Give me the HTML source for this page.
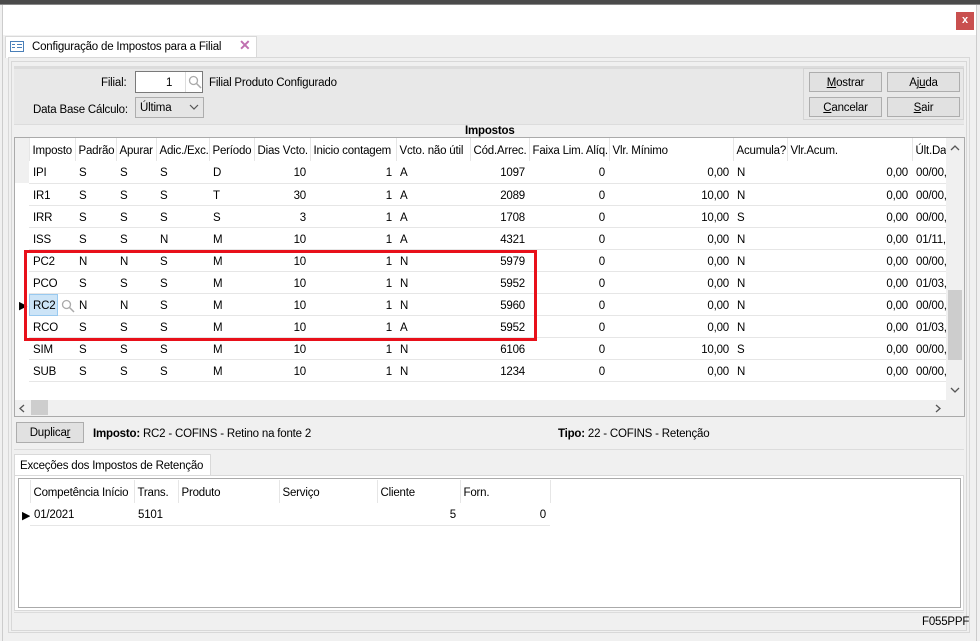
<!DOCTYPE html>
<html><head><meta charset="utf-8"><style>
*{box-sizing:border-box;margin:0;padding:0}
body{width:980px;height:641px;overflow:hidden;background:#f0f0f0;font-family:"Liberation Sans",sans-serif;font-size:11.5px;letter-spacing:-0.2px;color:#000;position:relative}
.a{position:absolute}
.t{position:absolute;margin-top:2px}
.btn{position:absolute;background:#e1e1e1;border:1px solid #adadad;text-align:center;line-height:20px}
table{border-collapse:collapse;table-layout:fixed;position:absolute}
td{height:22px;white-space:nowrap;overflow:hidden;padding:3px 4px 0;border-bottom:1px solid #e6e6e6}
th{height:23px;font-weight:normal;text-align:left;white-space:nowrap;overflow:hidden;padding:3px 3px 0;border-right:1px solid #e6e6e6}
.r{text-align:right}
td.i{border-bottom:none;background:#fff}
</style></head><body>
<div class="a" style="left:0;top:0;width:980px;height:4px;background:#4a4a4a"></div>
<div class="a" style="left:0;top:4px;width:980px;height:1px;background:#888"></div>
<div class="a" style="left:2px;top:5px;width:975px;height:636px;background:#f0f0f0;border-left:1px solid #ccc;border-right:1px solid #ccc"></div>
<div class="a" style="left:3px;top:5px;width:973px;height:30px;background:#fff"></div>
<div class="a" style="left:956px;top:12px;width:18px;height:18px;background:#c9504f;color:#fff;font-size:11px;font-weight:bold;text-align:center;line-height:17px">x</div>
<div class="a" style="left:5px;top:36px;width:252px;height:22px;background:#fff;border:1px solid #d9d9d9;border-bottom:none"></div>
<svg class="a" style="left:10px;top:41px" width="14" height="11"><rect x="0.5" y="0.5" width="13" height="10" fill="#fff" stroke="#4a7fb8"/><rect x="2" y="3" width="3" height="1" fill="#4a7fb8"/><rect x="2" y="6" width="3" height="1" fill="#4a7fb8"/><rect x="7" y="3" width="5" height="1" fill="#4a7fb8"/><rect x="7" y="6" width="5" height="1" fill="#4a7fb8"/></svg>
<div class="t" style="left:32px;top:39px">Configuração de Impostos para a Filial</div>
<div class="a" style="left:239px;top:37px;color:#c070b0;font-size:14px;font-weight:bold">✕</div>
<div class="a" style="left:8px;top:57px;width:962px;height:576px;border:1px solid #d8d8d8;background:#f0f0f0"></div>
<div class="a" style="left:11px;top:61px;width:956px;height:570px;border:1px solid #d8d8d8"></div>
<div class="a" style="left:14px;top:66px;width:950px;height:58px;background:#e8e8e8;border-top:3px solid #dcdcdc"></div>
<div class="t" style="left:101px;top:75px">Filial:</div>
<div class="a" style="left:135px;top:71px;width:68px;height:22px;background:#fff;border:1px solid #7a7a7a"></div>
<div class="t" style="left:166px;top:75px">1</div>
<div class="a" style="left:185px;top:72px;width:1px;height:20px;background:#ddd"></div>
<svg class="a" style="left:188px;top:75px" width="14" height="14"><circle cx="5.5" cy="5.5" r="4" fill="none" stroke="#aaa" stroke-width="1.3"/><line x1="8.5" y1="8.5" x2="13" y2="13" stroke="#aaa" stroke-width="1.5"/></svg>
<div class="t" style="left:209px;top:75px">Filial Produto Configurado</div>
<div class="t" style="left:33px;top:102px">Data Base Cálculo:</div>
<div class="a" style="left:135px;top:97px;width:69px;height:21px;background:#e5e5e5;border:1px solid #adadad"></div>
<div class="t" style="left:140px;top:100px">Última</div>
<svg class="a" style="left:189px;top:104px" width="10" height="6"><path d="M1 1 L5 5 L9 1" fill="none" stroke="#555" stroke-width="1.2"/></svg>
<div class="a" style="left:803px;top:68px;width:161px;height:52px;border:1px solid #d4d4d4"></div>
<div class="btn" style="left:809px;top:72px;width:73px;height:20px"><u>M</u>ostrar</div>
<div class="btn" style="left:887px;top:72px;width:73px;height:20px">Aj<u>u</u>da</div>
<div class="btn" style="left:809px;top:97px;width:73px;height:20px"><u>C</u>ancelar</div>
<div class="btn" style="left:887px;top:97px;width:73px;height:20px"><u>S</u>air</div>
<div class="a" style="left:14px;top:124px;width:950px;height:13px;background:#f0f0f0;border-top:1px solid #dcdcdc"></div>
<div class="a" style="left:465px;top:125px;font-weight:bold">Impostos</div>
<div class="a" style="left:14px;top:137px;width:951px;height:280px;background:#fff;border:1px solid #aaa"></div>
<table style="left:15px;top:138px;width:931px">
<colgroup><col style="width:14px"><col style="width:46px"><col style="width:41px"><col style="width:40px"><col style="width:53px"><col style="width:45px"><col style="width:56px"><col style="width:86px"><col style="width:74px"><col style="width:59px"><col style="width:80px"><col style="width:124px"><col style="width:54px"><col style="width:125px"><col style="width:34px"></colgroup>
<tr><th style="background:#f0f0f0"></th><th>Imposto</th><th>Padrão</th><th>Apurar</th><th>Adic./Exc.</th><th>Período</th><th>Dias Vcto.</th><th>Inicio contagem</th><th>Vcto. não útil</th><th>Cód.Arrec.</th><th>Faixa Lim. Alíq.</th><th>Vlr. Mínimo</th><th>Acumula?</th><th>Vlr.Acum.</th><th>Últ.Dat</th></tr>
<tr><td class="i" style="background:#f0f0f0"></td><td>IPI</td><td>S</td><td>S</td><td>S</td><td>D</td><td class="r">10</td><td class="r">1</td><td>A</td><td class="r">1097</td><td class="r">0</td><td class="r">0,00</td><td>N</td><td class="r">0,00</td><td>00/00,</td></tr>
<tr><td class="i"></td><td>IR1</td><td>S</td><td>S</td><td>S</td><td>T</td><td class="r">30</td><td class="r">1</td><td>A</td><td class="r">2089</td><td class="r">0</td><td class="r">10,00</td><td>N</td><td class="r">0,00</td><td>00/00,</td></tr>
<tr><td class="i"></td><td>IRR</td><td>S</td><td>S</td><td>S</td><td>S</td><td class="r">3</td><td class="r">1</td><td>A</td><td class="r">1708</td><td class="r">0</td><td class="r">10,00</td><td>S</td><td class="r">0,00</td><td>00/00,</td></tr>
<tr><td class="i"></td><td>ISS</td><td>S</td><td>S</td><td>N</td><td>M</td><td class="r">10</td><td class="r">1</td><td>A</td><td class="r">4321</td><td class="r">0</td><td class="r">0,00</td><td>N</td><td class="r">0,00</td><td>01/11,</td></tr>
<tr><td class="i"></td><td>PC2</td><td>N</td><td>N</td><td>S</td><td>M</td><td class="r">10</td><td class="r">1</td><td>N</td><td class="r">5979</td><td class="r">0</td><td class="r">0,00</td><td>N</td><td class="r">0,00</td><td>00/00,</td></tr>
<tr><td class="i"></td><td>PCO</td><td>S</td><td>S</td><td>S</td><td>M</td><td class="r">10</td><td class="r">1</td><td>N</td><td class="r">5952</td><td class="r">0</td><td class="r">0,00</td><td>N</td><td class="r">0,00</td><td>01/03,</td></tr>
<tr><td class="i" style="font-size:11px;padding:3px 0 0 4px">▶</td><td style="background:linear-gradient(90deg,#cce4f7 0,#cce4f7 29px,#fff 29px)">RC2</td><td>N</td><td>N</td><td>S</td><td>M</td><td class="r">10</td><td class="r">1</td><td>N</td><td class="r">5960</td><td class="r">0</td><td class="r">0,00</td><td>N</td><td class="r">0,00</td><td>00/00,</td></tr>
<tr><td class="i"></td><td>RCO</td><td>S</td><td>S</td><td>S</td><td>M</td><td class="r">10</td><td class="r">1</td><td>A</td><td class="r">5952</td><td class="r">0</td><td class="r">0,00</td><td>N</td><td class="r">0,00</td><td>01/03,</td></tr>
<tr><td class="i"></td><td>SIM</td><td>S</td><td>S</td><td>S</td><td>M</td><td class="r">10</td><td class="r">1</td><td>N</td><td class="r">6106</td><td class="r">0</td><td class="r">10,00</td><td>S</td><td class="r">0,00</td><td>00/00,</td></tr>
<tr><td class="i"></td><td>SUB</td><td>S</td><td>S</td><td>S</td><td>M</td><td class="r">10</td><td class="r">1</td><td>N</td><td class="r">1234</td><td class="r">0</td><td class="r">0,00</td><td>N</td><td class="r">0,00</td><td>00/00,</td></tr>
</table>
<div class="a" style="left:29px;top:294px;width:29px;height:22px;border:1px solid #99c9ef"></div>
<svg class="a" style="left:61px;top:299px" width="14" height="14"><circle cx="5.5" cy="5.5" r="4" fill="none" stroke="#aaa" stroke-width="1.3"/><line x1="8.5" y1="8.5" x2="13" y2="13" stroke="#aaa" stroke-width="1.5"/></svg>
<div class="a" style="left:24px;top:250px;width:513px;height:91px;border:3px solid #e8101a"></div>
<div class="a" style="left:946px;top:138px;width:18px;height:262px;background:#f0f0f0"></div>
<svg class="a" style="left:950px;top:145px" width="10" height="6"><path d="M1 5 L5 1 L9 5" fill="none" stroke="#555" stroke-width="1.3"/></svg>
<div class="a" style="left:948px;top:290px;width:14px;height:70px;background:#cdcdcd"></div>
<svg class="a" style="left:950px;top:387px" width="10" height="6"><path d="M1 1 L5 5 L9 1" fill="none" stroke="#555" stroke-width="1.3"/></svg>
<div class="a" style="left:15px;top:400px;width:949px;height:16px;background:#f0f0f0"></div>
<svg class="a" style="left:19px;top:404px" width="6" height="9"><path d="M5 1 L1 4.5 L5 8" fill="none" stroke="#555" stroke-width="1.3"/></svg>
<div class="a" style="left:31px;top:400px;width:17px;height:15px;background:#cdcdcd"></div>
<svg class="a" style="left:935px;top:404px" width="6" height="9"><path d="M1 1 L5 4.5 L1 8" fill="none" stroke="#555" stroke-width="1.3"/></svg>
<div class="btn" style="left:16px;top:422px;width:68px;height:21px;line-height:21px">Duplica<u>r</u></div>
<div class="t" style="left:93px;top:426px"><b>Imposto:</b> RC2 - COFINS - Retino na fonte 2</div>
<div class="t" style="left:558px;top:426px"><b>Tipo:</b> 22 - COFINS - Retenção</div>
<div class="a" style="left:14px;top:449px;width:950px;height:1px;background:#dcdcdc"></div>
<div class="a" style="left:14px;top:454px;width:197px;height:22px;background:#fff;border:1px solid #d9d9d9;border-bottom:none"></div>
<div class="t" style="left:20px;top:458px">Exceções dos Impostos de Retenção</div>
<div class="a" style="left:14px;top:475px;width:950px;height:136px;background:#fff;border:1px solid #d9d9d9"></div>
<div class="a" style="left:18px;top:478px;width:943px;height:130px;border:1px solid #aaa"></div>
<table style="left:19px;top:480px;width:531px">
<colgroup><col style="width:11px"><col style="width:104px"><col style="width:44px"><col style="width:101px"><col style="width:98px"><col style="width:83px"><col style="width:90px"></colgroup>
<tr><th></th><th>Competência Início</th><th>Trans.</th><th>Produto</th><th>Serviço</th><th>Cliente</th><th>Forn.</th></tr>
<tr><td class="i" style="font-size:11px;padding:3px 0 0 3px;border-bottom:none">▶</td><td>01/2021</td><td>5101</td><td></td><td></td><td class="r">5</td><td class="r">0</td></tr>
</table>
<div class="a" style="left:14px;top:612px;width:950px;height:1px;background:#dcdcdc"></div>
<div class="t" style="left:922px;top:614px">F055PPF</div>
</body></html>
